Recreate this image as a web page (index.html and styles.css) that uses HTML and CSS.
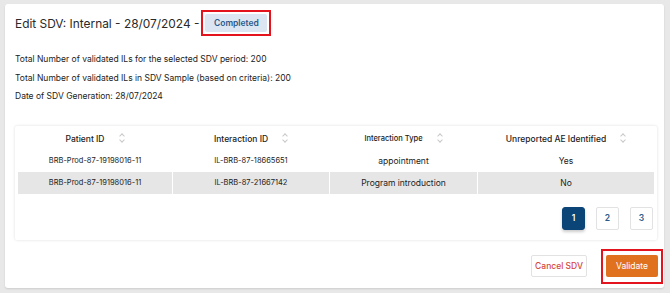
FILE: index.html
```html
<!DOCTYPE html>
<html lang="en">
<head>
  <meta charset="UTF-8" />
  <title>Edit SDV</title>
  <link rel="stylesheet" href="styles.css">
</head>
<body>

  <div class="card">
    <!-- Title -->
    <div class="title-row">
      <h1>Edit SDV: Internal - 28/07/2024 -</h1>
      <div class="highlight">
        <span class="badge">Completed</span>
      </div>
    </div>

    <!-- Summary -->
    <div class="info">
      <p>Total Number of validated ILs for the selected SDV period: 200</p>
      <p>Total Number of validated ILs in SDV Sample (based on criteria): 200</p>
      <p>Date of SDV Generation: 28/07/2024</p>
    </div>

    <!-- Table -->
    <div class="table-card">
      <table>
        <thead>
          <tr>
            <th class="col-1"><span>Patient ID</span><i class="sort"></i></th>
            <th class="col-2"><span>Interaction ID</span><i class="sort"></i></th>
            <th class="col-3 small"><span>Interaction Type</span><i class="sort"></i></th>
            <th class="col-4"><span>Unreported AE Identified</span><i class="sort"></i></th>
          </tr>
        </thead>
        <tbody>
          <tr>
            <td class="id">BRB-Prod-87-19198016-11</td>
            <td class="id">IL-BRB-87-18665651</td>
            <td>appointment</td>
            <td class="yes">Yes</td>
          </tr>
          <tr class="alt">
            <td class="id">BRB-Prod-87-19198016-11</td>
            <td class="id">IL-BRB-87-21667142</td>
            <td>Program introduction</td>
            <td class="yes">No</td>
          </tr>
        </tbody>
      </table>

      <div class="pager">
        <button class="page active">1</button>
        <button class="page">2</button>
        <button class="page">3</button>
      </div>
    </div>

    <!-- Actions -->
    <div class="actions">
      <button class="btn-cancel">Cancel SDV</button>
      <div class="highlight wide">
        <button class="btn-validate">Validate</button>
      </div>
    </div>
  </div>

</body>
</html>
```

FILE: styles.css
```css
body {
  margin: 0;
  padding: 4px 6px 5px 5px;
  background: #e8e8e8;
  font-family: 'Inter', 'Liberation Sans', sans-serif;
  color: #222;
}

.card {
  background: #fff;
  border-radius: 3px;
  box-shadow: 0 1px 2px rgba(0,0,0,0.12);
  padding: 6px 7px 4px 10px;
}

.title-row {
  display: flex;
  align-items: center;
  gap: 2px;
}

h1 {
  margin: 0;
  font-size: 11.9px;
  font-weight: 400;
  color: #2a2a2a;
}

.highlight {
  border: 2px solid #e3141e;
  padding: 2px;
  display: inline-flex;
}

.highlight.wide {
  padding: 4px 3px 5px 3px;
}

.badge {
  display: block;
  width: 62px;
  height: 18px;
  line-height: 18px;
  text-align: center;
  background: #dbe6f2;
  color: #2c5a8c;
  font-size: 8.5px;
  font-weight: 600;
  border-radius: 2px;
}

.info {
  margin-top: 17px;
}

.info p {
  margin: 0;
  height: 18.5px;
  font-size: 8.5px;
  line-height: 12px;
  color: #222;
}

.table-card {
  margin-top: 17px;
  box-shadow: 0 0 3px rgba(0,0,0,0.14);
  border-radius: 2px;
  padding: 1px 3px 10px 3px;
}

table {
  width: 100%;
  border-collapse: collapse;
  table-layout: fixed;
}

th, td {
  text-align: center;
  padding: 0;
  border-left: 1px solid #fff;
}

th:first-child, td:first-child {
  border-left: none;
}

th {
  height: 23px;
  font-size: 8.5px;
  font-weight: 500;
  color: #222;
}

th.small {
  font-size: 7.5px;
}

th span {
  vertical-align: middle;
}

.col-1 { width: 154px; }
.col-2 { width: 156px; }
.col-3 { width: 147px; }

.sort {
  display: inline-block;
  vertical-align: middle;
  width: 6px;
  height: 10px;
  margin-left: 14px;
  position: relative;
}

.sort::before,
.sort::after {
  content: "";
  position: absolute;
  left: 1px;
  width: 3px;
  height: 3px;
  border-left: 1px solid #c8c8c8;
  border-top: 1px solid #c8c8c8;
}

.sort::before {
  top: 1px;
  transform: rotate(45deg);
}

.sort::after {
  bottom: 1px;
  transform: rotate(225deg);
}

td {
  height: 22px;
  font-size: 8.5px;
  color: #222;
}

td.id {
  font-size: 7.5px;
}

tr.alt td {
  background: #e6e6e6;
}

.pager {
  display: flex;
  justify-content: flex-end;
  gap: 11px;
  margin-top: 13px;
  padding-right: 1px;
}

.page {
  width: 23px;
  height: 23px;
  padding: 0;
  border: 1px solid #e2e2e2;
  border-radius: 2px;
  background: #fff;
  color: #2c5a8c;
  font-family: inherit;
  font-size: 8.5px;
  font-weight: 600;
}

.page.active {
  background: #0b4477;
  border-color: #0b4477;
  color: #fff;
  border-radius: 3px;
  box-shadow: 0 2px 3px rgba(0,0,0,0.2);
}

.actions {
  display: flex;
  justify-content: flex-end;
  align-items: center;
  gap: 14px;
  margin-top: 9px;
  margin-right: -6px;
}

.btn-cancel,
.btn-validate {
  height: 22px;
  padding: 0;
  font-family: inherit;
  font-size: 8.5px;
  font-weight: 500;
  border-radius: 2px;
}

.btn-cancel {
  width: 56px;
  background: #fff;
  border: 1px solid #e2e2e2;
  color: #d5463d;
}

.btn-validate {
  width: 52px;
  background: #e0711f;
  border: none;
  color: #fff;
  font-weight: 400;
}
```
